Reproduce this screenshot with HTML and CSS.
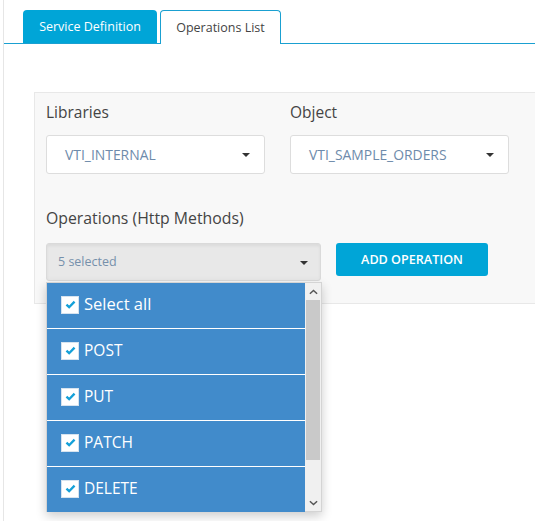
FILE: index.html
```html
<!DOCTYPE html>
<html>
<head>
<meta charset="utf-8">
<link rel="stylesheet" href="styles.css">
</head>
<body>
<div class="page">
  <div class="tabs">
    <div class="tab tab-active">Service Definition</div>
    <div class="tab tab-current">Operations List</div>
  </div>
  <div class="panel">
    <div class="row">
      <div class="field">
        <div class="label">Libraries</div>
        <div class="select"><span>VTI_INTERNAL</span><i class="caret"></i></div>
      </div>
      <div class="field">
        <div class="label">Object</div>
        <div class="select"><span>VTI_SAMPLE_ORDERS</span><i class="caret"></i></div>
      </div>
    </div>
    <div class="label ops-label">Operations (Http Methods)</div>
    <div class="actions">
      <div class="multi">
        <div class="multi-btn"><span>5 selected</span><i class="caret"></i></div>
        <div class="menu">
          <ul class="items">
            <li class="item"><span class="check"><svg viewBox="0 0 12 10" width="11" height="9"><path d="M1.5 5.2 L4.5 8 L10.5 1.8" fill="none" stroke="#14a0d8" stroke-width="2.6"/></svg></span><span class="item-text big">Select all</span></li>
            <li class="item"><span class="check"><svg viewBox="0 0 12 10" width="11" height="9"><path d="M1.5 5.2 L4.5 8 L10.5 1.8" fill="none" stroke="#14a0d8" stroke-width="2.6"/></svg></span><span class="item-text">POST</span></li>
            <li class="item"><span class="check"><svg viewBox="0 0 12 10" width="11" height="9"><path d="M1.5 5.2 L4.5 8 L10.5 1.8" fill="none" stroke="#14a0d8" stroke-width="2.6"/></svg></span><span class="item-text">PUT</span></li>
            <li class="item"><span class="check"><svg viewBox="0 0 12 10" width="11" height="9"><path d="M1.5 5.2 L4.5 8 L10.5 1.8" fill="none" stroke="#14a0d8" stroke-width="2.6"/></svg></span><span class="item-text">PATCH</span></li>
            <li class="item"><span class="check"><svg viewBox="0 0 12 10" width="11" height="9"><path d="M1.5 5.2 L4.5 8 L10.5 1.8" fill="none" stroke="#14a0d8" stroke-width="2.6"/></svg></span><span class="item-text">DELETE</span></li>
          </ul>
          <div class="scrollbar">
            <div class="arrow"><svg viewBox="0 0 10 6" width="9" height="6"><path d="M1 5 L5 1.2 L9 5" fill="none" stroke="#555" stroke-width="1.6"/></svg></div>
            <div class="track"><div class="thumb"></div></div>
            <div class="arrow"><svg viewBox="0 0 10 6" width="9" height="6"><path d="M1 1 L5 4.8 L9 1" fill="none" stroke="#555" stroke-width="1.6"/></svg></div>
          </div>
        </div>
      </div>
      <div class="add-btn">ADD OPERATION</div>
    </div>
  </div>
</div>
</body>
</html>
```

FILE: styles.css
```css
* { box-sizing: border-box; }
html, body { margin: 0; padding: 0; background: #fff; }
body {
  font-family: "Open Sans", "Noto Sans", sans-serif;
  color: #444;
  width: 535px;
  height: 521px;
  overflow: hidden;
}
.page {
  margin-left: 3px;
  border-left: 1px solid #e6e6e6;
  height: 521px;
}
.tabs {
  display: flex;
  gap: 3px;
  padding: 10px 0 0 19px;
  border-bottom: 1px solid #1aa0d1;
  height: 44px;
}
.tab {
  height: 34px;
  font-size: 12.5px;
  display: flex;
  align-items: center;
  justify-content: center;
  border-radius: 4px 4px 0 0;
}
.tab-active {
  width: 134px;
  background: #00a5d7;
  color: #fff;
  height: 33px;
  align-self: flex-end;
}
.tab-current {
  width: 121px;
  background: #fff;
  color: #444;
  border: 1px solid #1aa0d1;
  border-bottom: none;
  margin-bottom: -1px;
}
.panel {
  margin: 48px 0 0 30px;
  background: #f8f8f8;
  border: 1px solid #e8e8e8;
  border-right: none;
  padding: 8px 0 22px 11px;
}
.row { display: flex; gap: 25px; }
.field { width: 219px; }
.label {
  font-size: 15.5px;
  line-height: 22px;
  color: #444;
}
.field .label { margin-bottom: 12px; }
.ops-label { font-size: 15.8px; }
.select {
  height: 39px;
  background: #fff;
  border: 1px solid #ddd;
  border-radius: 3px;
  display: flex;
  align-items: center;
  justify-content: space-between;
  padding: 0 14px 1px 18px;
  font-size: 13.9px;
  color: #6e8bab;
}
.caret {
  width: 0; height: 0;
  border-left: 4px solid transparent;
  border-right: 4px solid transparent;
  border-top: 4px solid #333;
  margin-top: 2px;
}
.ops-label { margin-top: 33px; margin-bottom: 14px; }
.actions { display: flex; gap: 15px; align-items: flex-start; }
.multi { position: relative; width: 275px; }
.multi-btn {
  height: 38px;
  background: #e8e8e8;
  border: 1px solid #dadada;
  border-radius: 3px;
  box-shadow: inset 0 2px 3px rgba(0,0,0,0.06);
  display: flex;
  align-items: center;
  justify-content: space-between;
  padding: 0 12px 1px 11px;
  font-size: 12.5px;
  color: #7690ab;
}
.add-btn {
  width: 152px;
  height: 33px;
  background: #00a5d7;
  color: #fff;
  border-radius: 3px;
  font-size: 12.6px;
  font-weight: 600;
  display: flex;
  align-items: center;
  justify-content: center;
}
.menu {
  position: absolute;
  top: 39px;
  left: 0;
  width: 276px;
  height: 230px;
  display: flex;
  background: #fff;
  border: 1px solid #d4d4d4;
  box-shadow: 0 4px 10px rgba(0,0,0,0.2);
}
.items {
  list-style: none;
  margin: 0;
  padding: 0;
  flex: 1;
  background: #fff;
}
.item {
  height: 45px;
  background: #418bcb;
  display: flex;
  align-items: center;
  padding-left: 14px;
  margin-bottom: 1px;
  color: #fff;
}
.check {
  width: 18px;
  height: 18px;
  background: #fff;
  border: 1px solid #d6e3ef;
  display: flex;
  align-items: center;
  justify-content: center;
  margin-right: 5px;
  margin-top: -2px;
}
.item-text { font-size: 15.5px; padding-bottom: 4px; }
.item-text.big { font-size: 16.5px; }
.scrollbar {
  width: 16px;
  background: #f0f0f0;
  display: flex;
  flex-direction: column;
}
.arrow {
  height: 17px;
  display: flex;
  align-items: center;
  justify-content: center;
}
.track { flex: 1; }
.thumb {
  margin: 0 1px;
  height: 160px;
  background: #c9c9c9;
}
```
